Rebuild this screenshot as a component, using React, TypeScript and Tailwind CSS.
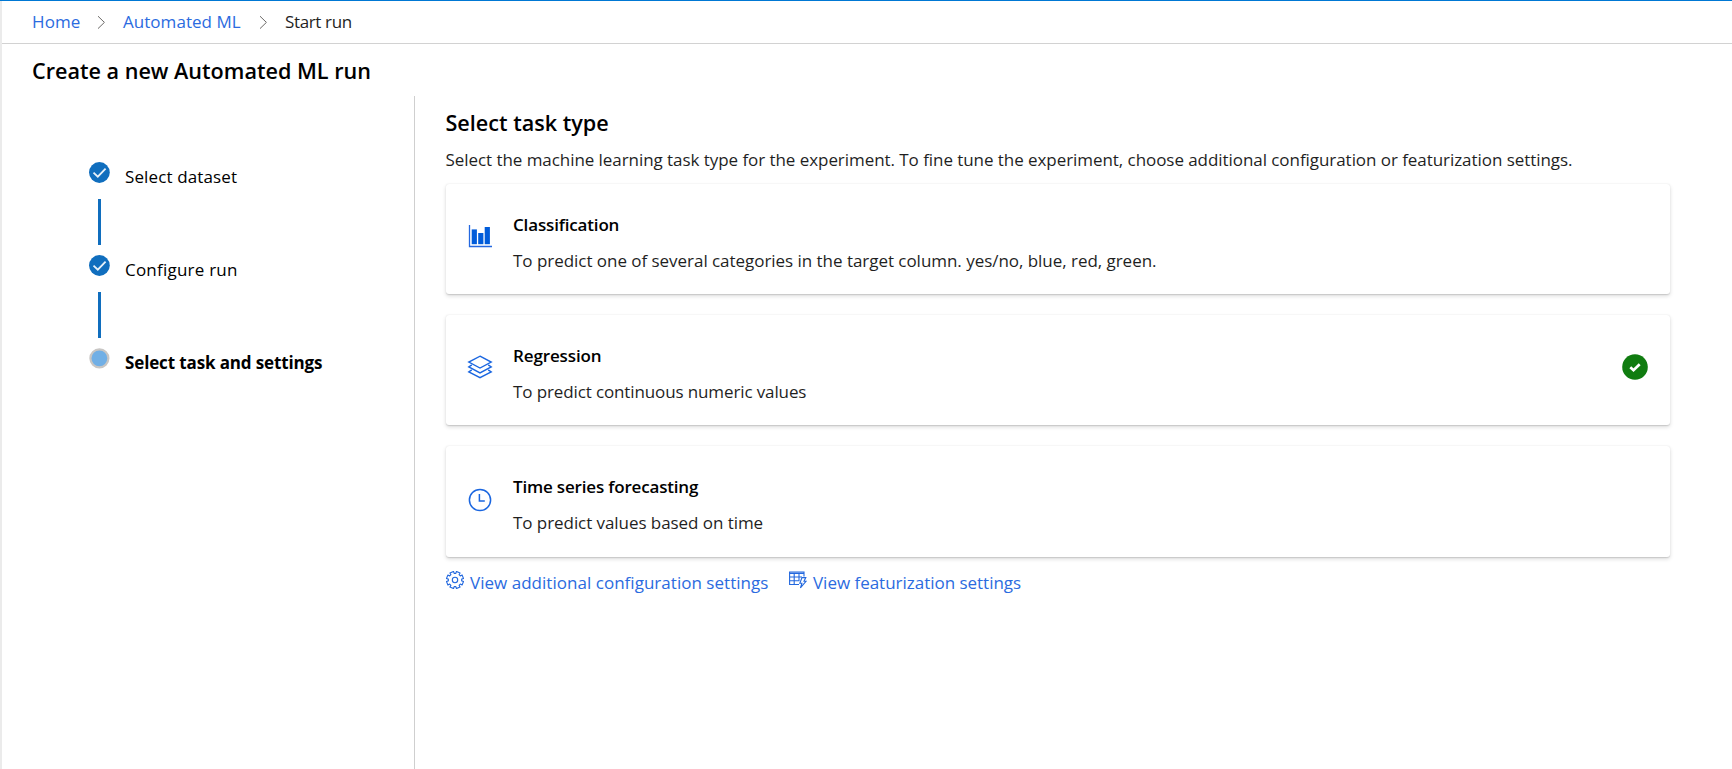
import React from "react";

function StepCheck() {
  return (
    <svg className="block size-[21px] shrink-0" viewBox="0 0 21 21" fill="none">
      <circle cx="10.4" cy="10.5" r="10.4" fill="#106ebe" />
      <path d="M4.5 10.6 L8.8 14.7 L16.6 6.6" stroke="#fff" strokeOpacity="0.9" strokeWidth="1.8" />
    </svg>
  );
}

function StepCurrent() {
  return (
    <svg className="block size-[21px] shrink-0" viewBox="0 0 21 21">
      <circle cx="10.4" cy="10.3" r="9" fill="#71afe5" stroke="#c8c6c4" strokeWidth="2.2" />
    </svg>
  );
}

function BreadcrumbChevron() {
  return (
    <svg className="block h-[15px] w-[9px] shrink-0" viewBox="0 0 9 15" fill="none">
      <path d="M1 1.2 L7.4 7.4 L1 13.6" stroke="#6b6967" strokeWidth="1" />
    </svg>
  );
}

function BarChartIcon() {
  return (
    <svg className="mt-[39px] block size-[26px]" viewBox="0 0 26 26">
      <path d="M2.5 2 V23.5 H25" fill="none" stroke="#2468e0" strokeWidth="1.3" />
      <rect x="4.7" y="6.4" width="5.2" height="14.8" fill="#015cda" />
      <rect x="11.2" y="10" width="5.2" height="11.2" fill="#015cda" />
      <rect x="17.7" y="4" width="5.2" height="17.2" fill="#015cda" />
    </svg>
  );
}

function LayersIcon() {
  return (
    <svg
      className="mt-[39.25px] block size-[26px]"
      viewBox="0 0 26 26"
      fill="none"
      stroke="#1a66e0"
      strokeWidth="1.4"
    >
      <path d="M13 2.2 L24.2 8.1 L13 14 L1.8 8.1 Z" />
      <path d="M4.8 10.9 L1.8 12.9 L13 18.9 L24.2 12.9 L21.2 10.9" />
      <path d="M4.8 15.8 L1.8 17.8 L13 23.6 L24.2 17.8 L21.2 15.8" />
    </svg>
  );
}

function ClockIcon() {
  return (
    <svg className="mt-[41px] block size-[26px]" viewBox="0 0 26 26" fill="none" stroke="#1a66e0" strokeWidth="1.5">
      <circle cx="13" cy="13" r="10.6" />
      <path d="M12.4 7 V14 H17.8" />
    </svg>
  );
}

function GearIcon() {
  const teeth = 8;
  const points: string[] = [];
  for (let i = 0; i < teeth; i++) {
    const a = (i * 360) / teeth - 67.5;
    const corners: [number, number][] = [
      [-13, 8.7],
      [13, 8.7],
      [15, 6.7],
      [30, 6.7],
    ];
    for (const [offset, r] of corners) {
      const t = ((a + offset) * Math.PI) / 180;
      points.push(`${(9 + r * Math.cos(t)).toFixed(2)},${(9 + r * Math.sin(t)).toFixed(2)}`);
    }
  }
  return (
    <svg className="block size-[18px] shrink-0" viewBox="0 0 18 18" fill="none" stroke="#2368de" strokeWidth="1.1">
      <polygon points={points.join(" ")} strokeLinejoin="round" />
      <circle cx="9" cy="9" r="2.7" />
    </svg>
  );
}

function TableBoltIcon() {
  return (
    <svg className="block size-[18px] shrink-0" viewBox="0 0 18 18" fill="none" stroke="#2368de" strokeWidth="1.1">
      <path d="M10 13.5 H0.6 V1 H15 V5.5" />
      <path d="M0.6 2.3 H15" strokeWidth="1.4" />
      <path d="M0.6 6 H13 M0.6 9.7 H10.5 M5.2 2 V13.5 M10 2 V10" />
      <path d="M13 6.6 H16.8 L15 10.2 H17.2 L11.4 16.8 L12.9 12.3 H10.8 Z" />
    </svg>
  );
}

function SelectedBadge() {
  return (
    <svg className="mt-[39.5px] block size-[26px] shrink-0" viewBox="0 0 26 26" fill="none">
      <circle cx="13" cy="13" r="12.8" fill="#107c10" />
      <path d="M8.3 13.2 L11.5 16.2 L17.7 10.2" stroke="#fff" strokeWidth="2.7" />
    </svg>
  );
}

const steps = [
  { label: "Select dataset", done: true, text: "tracking-[0.12px]" },
  { label: "Configure run", done: true, text: "tracking-[0.22px]" },
  { label: "Select task and settings", done: false, text: "font-bold tracking-[-0.13px]" },
];

const tasks = [
  {
    title: "Classification",
    description: "To predict one of several categories in the target column. yes/no, blue, red, green.",
    icon: <BarChartIcon />,
    titleTracking: "tracking-[-0.16px]",
    descTracking: "tracking-[-0.037px]",
  },
  {
    title: "Regression",
    description: "To predict continuous numeric values",
    icon: <LayersIcon />,
    titleTracking: "tracking-[-0.12px]",
    descTracking: "tracking-[-0.12px]",
    selected: true,
  },
  {
    title: "Time series forecasting",
    description: "To predict values based on time",
    icon: <ClockIcon />,
    titleTracking: "tracking-[-0.18px]",
    descTracking: "tracking-[-0.06px]",
  },
];

export default function App() {
  return (
    <div className="flex h-[769px] w-full flex-col overflow-hidden border-t border-[#0078d4] bg-white font-['Open_Sans',sans-serif] text-[17px] leading-6 text-black">
      <div className="flex flex-1 flex-col border-l-2 border-[#ebebeb]">
        <nav className="flex h-[43px] shrink-0 items-center border-b border-[#d2d2d2] pl-[30px]">
          <a className="w-[65px] tracking-[0.1px] text-[#2b6be0]">Home</a>
          <BreadcrumbChevron />
          <a className="ml-[17px] w-[136px] tracking-[0.04px] text-[#2b6be0]">Automated ML</a>
          <BreadcrumbChevron />
          <span className="ml-[17px] tracking-[-0.36px] text-[#1f1f1f]">Start run</span>
        </nav>
        <h1 className="h-[52px] shrink-0 pl-[30px] pt-[12px] text-[21.6px] font-semibold leading-[30px]">
          Create a new Automated ML run
        </h1>
        <div className="flex flex-1">
          <aside className="w-[413px] shrink-0 border-r border-[#cfcfcf] pl-[87px] pt-[66px]">
            {steps.map((step, i) => (
              <div key={step.label} className="flex h-[93px]">
                <div className="flex w-[21px] flex-col items-center">
                  {step.done ? <StepCheck /> : <StepCurrent />}
                  {i < steps.length - 1 && <div className="mt-4 h-[46px] w-[2.5px] bg-[#106ebe]" />}
                </div>
                <span className={`ml-[15px] mt-[3px] ${step.text}`}>{step.label}</span>
              </div>
            ))}
          </aside>
          <main className="flex flex-1 flex-col pl-[30.5px] pr-[62px] pt-[12px]">
            <h2 className="text-[21.6px] font-semibold leading-[30px]">Select task type</h2>
            <p className="mt-[10px] whitespace-nowrap tracking-[-0.058px] text-[#1f1f1f]">
              Select the machine learning task type for the experiment. To fine tune the experiment, choose additional
              configuration or featurization settings.
            </p>
            <div className="mt-[11.5px] flex flex-col gap-[20.75px]">
              {tasks.map((task) => (
                <section
                  key={task.title}
                  className="flex h-[110.5px] items-start rounded-[3px] bg-white pl-[21.5px] pr-[22px] shadow-[0_2px_4.5px_rgba(0,0,0,0.14),0_0.4px_1.2px_rgba(0,0,0,0.13)]"
                >
                  {task.icon}
                  <div className="ml-[20px] flex flex-1 flex-col gap-[11.75px] pt-[29.25px]">
                    <h3 className={`font-semibold ${task.titleTracking}`}>{task.title}</h3>
                    <p className={`text-[#1f1f1f] ${task.descTracking}`}>{task.description}</p>
                  </div>
                  {task.selected && <SelectedBadge />}
                </section>
              ))}
            </div>
            <div className="mt-[14px] flex text-[#2b6be0]">
              <a className="flex w-[343px] gap-[6.5px] tracking-[0.028px]">
                <GearIcon />
                View additional configuration settings
              </a>
              <a className="flex gap-[6.5px] tracking-[-0.02px]">
                <TableBoltIcon />
                View featurization settings
              </a>
            </div>
          </main>
        </div>
      </div>
    </div>
  );
}
